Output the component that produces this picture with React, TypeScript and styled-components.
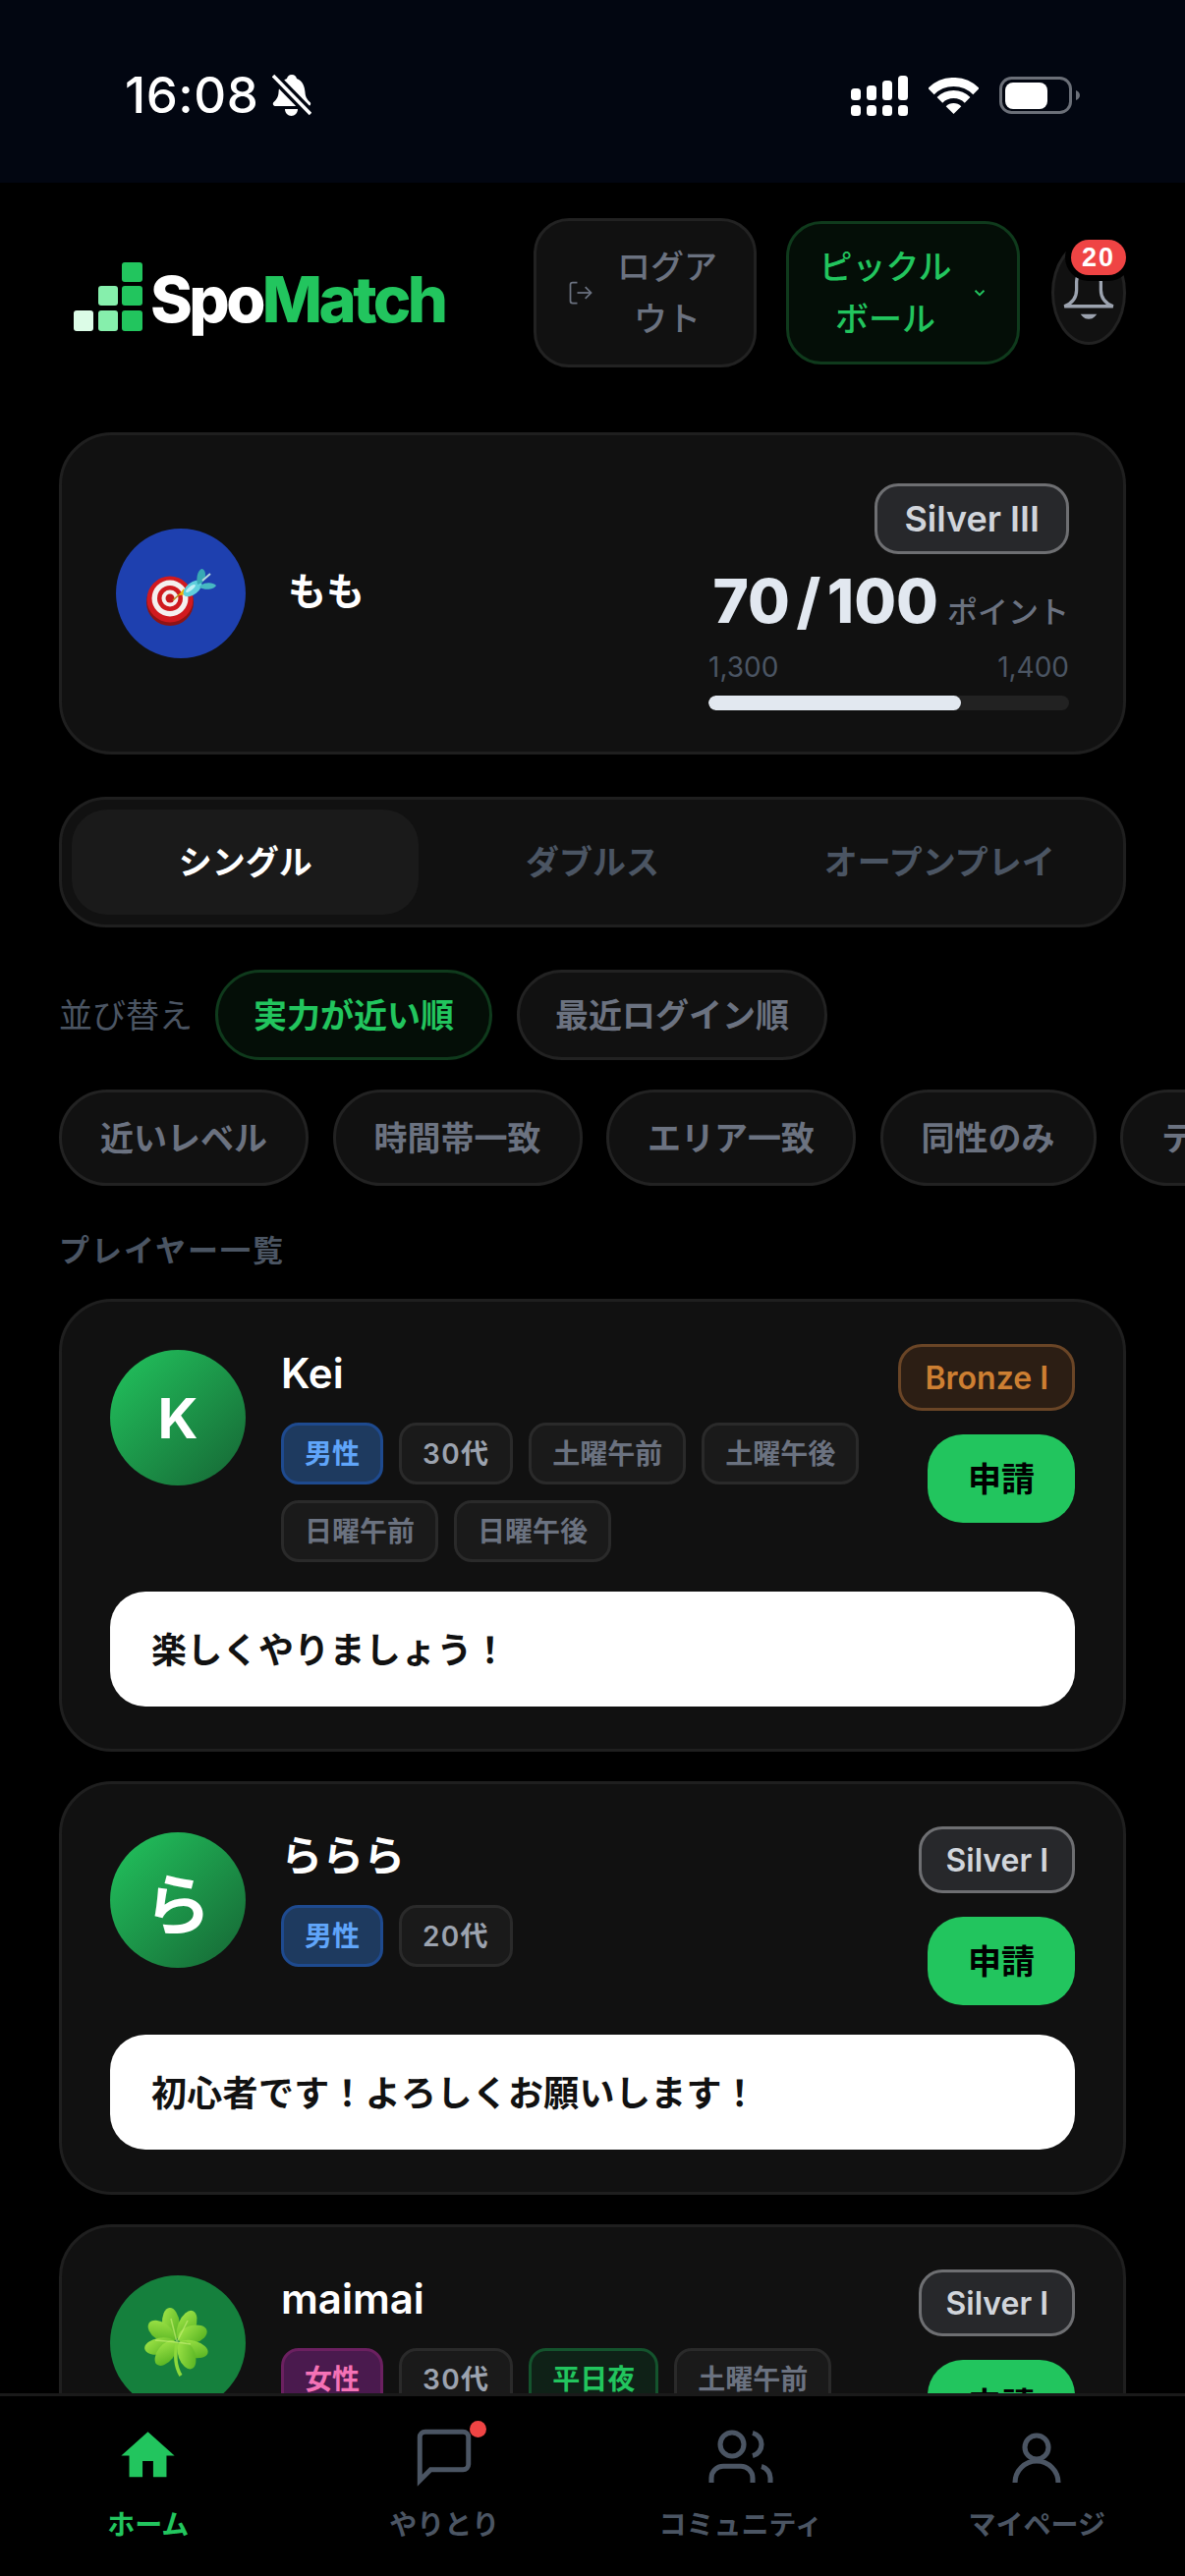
import styled, { createGlobalStyle } from 'styled-components'

const GlobalStyle = createGlobalStyle`
  html, body {
    margin: 0;
    background: #000;
  }
  * {
    box-sizing: border-box;
  }
  body {
    font-family: Inter, "Noto Sans CJK JP", "Noto Sans", sans-serif;
  }
`

const Page = styled.div`
  width: 1206px;
  height: 100vh;
  display: flex;
  flex-direction: column;
  overflow: hidden;
  background: #000;
`

/* ---------- status bar ---------- */
const StatusBar = styled.div`
  flex: none;
  height: 186px;
  background: #020611;
  display: flex;
  align-items: flex-start;
  justify-content: space-between;
  padding: 72px 107px 0 127px;
`

const StatusLeft = styled.div`
  display: flex;
  align-items: center;
  gap: 14px;
  height: 50px;
`

const Clock = styled.span`
  color: #fff;
  font-size: 51px;
  font-weight: 500;
  line-height: 50px;
  letter-spacing: 0.5px;
`

const StatusRight = styled.div`
  display: flex;
  align-items: center;
  gap: 21px;
  height: 50px;
`

/* ---------- header ---------- */
const Header = styled.header`
  flex: none;
  display: flex;
  align-items: center;
  justify-content: space-between;
  padding: 36px 60px 66px 75px;
`

const Logo = styled.div`
  display: flex;
  align-items: flex-end;
  gap: 8px;
  margin-top: 8px;
`

const LogoText = styled.span`
  font-size: 65px;
  font-weight: 800;
  line-height: 70px;
  letter-spacing: -3.6px;
  color: #fff;
  margin-bottom: -3px;

  em {
    font-style: normal;
    color: #22c55e;
  }
`

const HeaderActions = styled.div`
  display: flex;
  align-items: center;
  gap: 30px;
`

const LogoutButton = styled.button`
  width: 227px;
  height: 152px;
  display: flex;
  align-items: center;
  justify-content: center;
  gap: 22px;
  padding: 0 5px 0 0;
  background: #111;
  border: 3px solid #222;
  border-radius: 36px;
  color: #6b7280;
  font: inherit;
  font-size: 34px;
  font-weight: 500;
  line-height: 53px;
  text-align: center;
`

const SportButton = styled(LogoutButton)`
  width: 238px;
  height: 146px;
  gap: 18px;
  padding: 0;
  background: #040e07;
  border-color: #0f3a1c;
  color: #22c55e;
`

const WrapLabel = styled.span`
  width: ${(props) => props.$width}px;
`

const BellButton = styled.button`
  position: relative;
  width: 76px;
  height: 106px;
  margin-left: 2px;
  display: flex;
  align-items: center;
  justify-content: center;
  padding: 0;
  background: #111;
  border: 3px solid #222;
  border-radius: 50%;
`

const BellBadge = styled.span`
  position: absolute;
  top: -4px;
  right: -3px;
  width: 56px;
  height: 36px;
  display: flex;
  align-items: center;
  justify-content: center;
  background: #ef4444;
  border-radius: 18px;
  box-shadow: 0 0 0 6px #000;
  color: #fff;
  font-size: 27px;
  font-weight: 700;
  letter-spacing: 2px;
`

/* ---------- main column ---------- */
const Main = styled.main`
  flex: 1;
  min-height: 0;
  overflow: hidden;
  padding: 0 60px;
`

const ProfileCard = styled.section`
  height: 328px;
  display: flex;
  align-items: center;
  justify-content: space-between;
  padding: 49px 55px 42px;
  background: #111;
  border: 3px solid #1f1f1f;
  border-radius: 54px;
`

const ProfileLeft = styled.div`
  display: flex;
  align-items: center;
  gap: 43px;
  margin-top: -7px;
`

const ProfileName = styled.div`
  color: #fff;
  font-size: 39px;
  font-weight: 700;
  margin-bottom: 10px;
`

const ProfileRight = styled.div`
  width: 367px;
  display: flex;
  flex-direction: column;
  align-items: flex-end;
`

const RankBadge = styled.span`
  display: inline-flex;
  align-items: center;
  justify-content: center;
  height: ${(props) => (props.$large ? 72 : 68)}px;
  padding: 0 ${(props) => (props.$large ? 27 : 24)}px;
  flex: none;
  background: ${(props) => (props.$rank === 'bronze' ? '#2c1e14' : '#27282b')};
  border: 3px solid ${(props) => (props.$rank === 'bronze' ? '#6a4526' : '#6e6f72')};
  border-radius: 24px;
  color: ${(props) => (props.$rank === 'bronze' ? '#cd7f32' : '#d1d5db')};
  font-size: ${(props) => (props.$large ? 36 : 32)}px;
  font-weight: 600;
  white-space: nowrap;
`

const Points = styled.div`
  display: flex;
  align-items: baseline;
  justify-content: flex-end;
  gap: 9px;
  margin-top: 12px;
  width: 100%;
  height: 72px;
  line-height: 72px;
  white-space: nowrap;
`

const PointsValue = styled.span`
  flex: none;
  color: #e2e8f0;
  font-size: 62px;
  font-weight: 800;
  word-spacing: -7px;
`

const PointsUnit = styled.span`
  flex: none;
  color: #6b7280;
  font-size: 31px;
  font-weight: 500;
`

const RangeRow = styled.div`
  display: flex;
  justify-content: space-between;
  width: 100%;
  margin-top: 15px;
  color: #4b5563;
  font-size: 28px;
  line-height: 33px;
`

const ProgressTrack = styled.div`
  width: 100%;
  height: 15px;
  margin-top: 12px;
  background: #222;
  border-radius: 8px;
  overflow: hidden;
`

const ProgressFill = styled.div`
  height: 100%;
  background: #e2e8f0;
  border-radius: 8px;
`

const Tabs = styled.div`
  height: 133px;
  margin-top: 43px;
  padding: 10px;
  display: grid;
  grid-template-columns: repeat(3, 1fr);
  background: #111;
  border: 3px solid #1f1f1f;
  border-radius: 48px;
`

const Tab = styled.div`
  display: flex;
  align-items: center;
  justify-content: center;
  padding-bottom: 5px;
  border-radius: 36px;
  background: ${(props) => (props.$active ? '#1a1a1a' : 'transparent')};
  color: ${(props) => (props.$active ? '#fff' : '#4b5563')};
  font-size: 34px;
  font-weight: ${(props) => (props.$active ? 700 : 600)};
`

const SortRow = styled.div`
  display: flex;
  align-items: center;
  gap: 25px;
  margin-top: 43px;
`

const SortLabel = styled.span`
  color: #4b5563;
  font-size: 34px;
  margin-right: -2px;
  padding-bottom: 4px;
`

const Chip = styled.span`
  flex: none;
  display: inline-flex;
  align-items: center;
  height: ${(props) => (props.$tall ? 98 : 92)}px;
  padding: 0 ${(props) => (props.$tall ? 39 : 36)}px 4px;
  background: ${(props) => (props.$active ? '#040e07' : '#111')};
  border: 3px solid ${(props) => (props.$active ? '#0f3a1c' : '#222')};
  border-radius: 49px;
  color: ${(props) => (props.$active ? '#22c55e' : '#6b7280')};
  font-size: 34px;
  font-weight: 600;
  white-space: nowrap;
`

const FilterRow = styled.div`
  display: flex;
  gap: 24.5px;
  margin: 30px -60px 0 0;
  overflow: hidden;
`

const SectionTitle = styled.h2`
  margin: 48px 0 31px;
  color: #4b5563;
  font-size: 31px;
  font-weight: 600;
  line-height: 36px;
  letter-spacing: 2px;
`

const PlayerList = styled.div`
  display: flex;
  flex-direction: column;
  gap: 30px;
`

const PlayerCard = styled.article`
  padding: 43px 49px;
  background: #111;
  border: 3px solid #1f1f1f;
  border-radius: 54px;
`

const PlayerHead = styled.div`
  display: flex;
  align-items: flex-start;
  gap: 36px;
  margin-bottom: 30px;
`

const Avatar = styled.div`
  flex: none;
  width: ${(props) => props.$size}px;
  height: ${(props) => props.$size}px;
  display: flex;
  align-items: center;
  justify-content: center;
  border-radius: 50%;
  background: ${(props) => props.$bg};
  color: #fff;
  font-size: ${(props) => props.$fontSize || 57}px;
  font-weight: 700;
`

const PlayerAvatar = styled(Avatar)`
  margin-top: 6px;
`

const PlayerInfo = styled.div`
  flex: 1;
  min-width: 0;
`

const PlayerName = styled.div`
  height: 80px;
  color: #fff;
  font-size: 42px;
  font-weight: 600;
  line-height: 60px;
`

const TagList = styled.div`
  display: flex;
  flex-wrap: wrap;
  gap: 16px;
`

const tagColors = {
  male: { bg: '#1e3a5f', border: '#1e4a8f', text: '#60a5fa' },
  female: { bg: '#4a1a4e', border: '#6b2060', text: '#f472b6' },
  age: { bg: '#1a1a1a', border: '#2a2a2a', text: '#9ca3af' },
  slot: { bg: '#1a1a1a', border: '#2a2a2a', text: '#6b7280' },
  night: { bg: '#0f2117', border: '#14532d', text: '#22c55e' },
}

const Tag = styled.span`
  height: 63px;
  display: inline-flex;
  align-items: center;
  padding: 0 21px 3px;
  background: ${(props) => tagColors[props.$kind].bg};
  border: 3px solid ${(props) => tagColors[props.$kind].border};
  border-radius: 18px;
  color: ${(props) => tagColors[props.$kind].text};
  font-size: 28px;
  font-weight: 600;
  letter-spacing: ${(props) => (props.$kind === 'age' ? 1.3 : 0)}px;
  white-space: nowrap;
`

const PlayerSide = styled.div`
  flex: none;
  display: flex;
  flex-direction: column;
  align-items: flex-end;
  gap: 24px;
`

const ApplyButton = styled.button`
  width: 150px;
  height: 90px;
  padding: 0 0 4px;
  background: #22c55e;
  border: none;
  border-radius: 36px;
  color: #000;
  font: inherit;
  font-size: 34px;
  font-weight: 700;
`

const Message = styled.div`
  height: 117px;
  display: flex;
  align-items: center;
  padding: 0 42px 4px;
  background: #fff;
  border-radius: 36px;
  color: #111;
  font-size: 36px;
  font-weight: 600;
  letter-spacing: 0.3px;
`

/* ---------- bottom nav ---------- */
const BottomNav = styled.nav`
  flex: none;
  height: 186px;
  display: grid;
  grid-template-columns: repeat(4, 1fr);
  padding-top: 28px;
  background: #000;
  border-top: 3px solid #1a1a1a;
`

const NavItem = styled.div`
  display: flex;
  flex-direction: column;
  align-items: center;
  color: ${(props) => (props.$active ? '#22c55e' : '#4b5563')};
  font-size: 28px;
  font-weight: 600;
  line-height: 36px;
`

const NavIcon = styled.div`
  position: relative;
  height: 72px;
  margin-bottom: 13px;
  display: flex;
  justify-content: center;
`

const NavDot = styled.span`
  position: absolute;
  top: -3px;
  right: -10px;
  width: 17px;
  height: 17px;
  border-radius: 50%;
  background: #ef4444;
`

function MutedBell() {
  return (
    <svg width="40" height="44" viewBox="0 0 40 44" fill="none">
      <path
        d="M20 1c3 0 4.500 2 5 4 6 2 8 8 8.500 14 .3 5 2 7 5 10 1.500 1.500.5 4-2 4H3.500c-2.500 0-3.500-2.500-2-4 3-3 4.700-5 5-10 .5-6 2.500-12 8.500-14 .5-2 2-4 5-4z"
        fill="#fff"
      />
      <path d="M13 36h13c0 4-3 7-6.500 7S13 40 13 36z" fill="#fff" />
      <path d="M0 1 39 41" stroke="#020611" strokeWidth="10" />
      <path d="M1 2 39 41" stroke="#fff" strokeWidth="3.500" />
    </svg>
  )
}

function SignalIcon() {
  return (
    <svg width="58" height="41" viewBox="0 0 58 41" fill="#fff">
      <rect x="0" y="13" width="10" height="12" rx="3.500" />
      <rect x="16" y="10" width="10" height="15" rx="3.500" />
      <rect x="32" y="5" width="10" height="20" rx="3.500" />
      <rect x="48" y="0" width="10" height="25" rx="3.500" />
      <rect x="0" y="30" width="10" height="11" rx="3.500" />
      <rect x="16" y="30" width="10" height="11" rx="3.500" />
      <rect x="32" y="30" width="10" height="11" rx="3.500" />
      <rect x="48" y="30" width="10" height="11" rx="3.500" />
    </svg>
  )
}

function WifiIcon() {
  return (
    <svg width="51" height="37" viewBox="0 0 51 37" fill="none" stroke="#fff">
      <path d="M2.500 14A32.500 32.500 0 0 1 48.500 14" strokeWidth="9" />
      <path d="M11.400 22.900A20 20 0 0 1 39.600 22.900" strokeWidth="8" />
      <path d="M25.500 37 17.700 29.200A11 11 0 0 1 33.300 29.200z" fill="#fff" stroke="none" />
    </svg>
  )
}

function BatteryIcon() {
  return (
    <svg width="82" height="38" viewBox="0 0 82 38" fill="none">
      <rect x="1.500" y="1.500" width="71" height="35" rx="11" stroke="#6b6f78" strokeWidth="3" />
      <rect x="6" y="6" width="43" height="27" rx="8" fill="#fff" />
      <path d="M78 14c2 .5 4 2.500 4 5s-2 4.500-4 5z" fill="#6b6f78" />
    </svg>
  )
}

function LogoMark() {
  return (
    <svg width="70" height="70" viewBox="0 0 70 70">
      <rect x="0" y="49" width="20" height="21" rx="3" fill="#dcfce7" />
      <rect x="25" y="24" width="20" height="20" rx="3" fill="#86efac" />
      <rect x="25" y="49" width="20" height="21" rx="3" fill="#86efac" />
      <rect x="49" y="0" width="21" height="20" rx="3" fill="#22c55e" />
      <rect x="49" y="24" width="21" height="20" rx="3" fill="#22c55e" />
      <rect x="49" y="49" width="21" height="21" rx="3" fill="#22c55e" />
    </svg>
  )
}

function LogoutIcon() {
  return (
    <svg width="28" height="28" viewBox="0 0 24 24" fill="none" stroke="#6b7280" strokeWidth="1.500">
      <path d="M9 21H5a2 2 0 0 1-2-2V5a2 2 0 0 1 2-2h4" />
      <path d="M16 17l5-5-5-5" />
      <path d="M21 12H9" />
    </svg>
  )
}

function ChevronIcon() {
  return (
    <svg width="18" height="18" viewBox="0 0 24 24" fill="none" stroke="#22c55e" strokeWidth="2.500">
      <path d="M6 9l6 6 6-6" />
    </svg>
  )
}

function BellIcon() {
  return (
    <svg width="66" height="66" viewBox="0 0 24 24" fill="none" stroke="#9ca3af" strokeWidth="1.200">
      <path d="M7.500 8a4.500 4.500 0 0 1 9 0v3c0 3 2 5 4.500 6H3c2.500-1 4.500-3 4.500-6z" />
      <path d="M10.300 20.500a1.940 1.200 0 0 0 3.400 0z" fill="#9ca3af" />
    </svg>
  )
}

function DartEmoji() {
  return (
    <svg width="132" height="132" viewBox="0 0 132 132">
      <ellipse cx="55" cy="75" rx="24" ry="24" fill="#8f1414" />
      <circle cx="55" cy="72" r="23.500" fill="#d11a1f" />
      <circle cx="55" cy="71" r="18.500" fill="#f4f1ef" />
      <circle cx="55" cy="71" r="13" fill="#cf1a1e" />
      <circle cx="55" cy="71" r="8.500" fill="#f4f1ef" />
      <circle cx="55" cy="71" r="4.500" fill="#c8171b" />
      <path d="M58 73 68 64" stroke="#b98a1a" strokeWidth="1.500" />
      <path d="M64 68 69 61 73 67z" fill="#f2b707" />
      <ellipse cx="78" cy="61" rx="11" ry="6" fill="#5fd0dc" transform="rotate(-38 78 61)" />
      <ellipse cx="76" cy="61" rx="6" ry="2" fill="#bff1f5" transform="rotate(-38 76 61)" />
      <path d="M83 57C81 49 84 41 88 41C92 43 92 50 88 55z" fill="#38a9b4" />
      <path d="M86 58C92 54 99 55 102 58C100 62 91 63 85 60z" fill="#46b8c2" />
      <path d="M88 53 96 46" stroke="#b6d8dc" strokeWidth="2" />
    </svg>
  )
}

function CloverEmoji() {
  return (
    <svg width="138" height="138" viewBox="0 0 138 138">
      <defs>
        <linearGradient id="leaf" x1="0" y1="0" x2="1" y2="1">
          <stop offset="0" stopColor="#a5e84a" />
          <stop offset="1" stopColor="#4fae1e" />
        </linearGradient>
      </defs>
      <g fill="url(#leaf)">
        <ellipse cx="62" cy="50" rx="9" ry="17" transform="rotate(-5 62 50)" />
        <ellipse cx="52" cy="57" rx="15" ry="9" transform="rotate(35 52 57)" />
        <ellipse cx="78" cy="52" rx="9" ry="17" transform="rotate(22 78 52)" />
        <ellipse cx="84" cy="60" rx="15" ry="9" transform="rotate(-15 84 60)" />
        <ellipse cx="51" cy="72" rx="16" ry="8.500" transform="rotate(-10 51 72)" />
        <ellipse cx="57" cy="79" rx="8.500" ry="15" transform="rotate(38 57 79)" />
        <ellipse cx="84" cy="75" rx="16" ry="8.500" transform="rotate(15 84 75)" />
        <ellipse cx="78" cy="81" rx="8.500" ry="15" transform="rotate(-20 78 81)" />
      </g>
      <path d="M68 68C66 82 66 92 72 102" fill="none" stroke="#8cd83c" strokeWidth="3.500" />
      <path
        d="M68 68 62 44M68 68 79 46M68 68 46 66M68 68 82 70"
        fill="none"
        stroke="#c9f27a"
        strokeWidth="1.500"
        opacity="0.6"
      />
    </svg>
  )
}

function HomeIcon() {
  return (
    <svg width="65" height="65" viewBox="0 0 24 24" fill="#22c55e">
      <path d="M10 20v-6h4v6h5v-8h3L12 3 2 12h3v8z" />
    </svg>
  )
}

function ChatIcon() {
  return (
    <svg width="66" height="66" viewBox="0 0 24 24" fill="none" stroke="#4b5563" strokeWidth="1.800">
      <path d="M21 15a2 2 0 0 1-2 2H7l-4 4V5a2 2 0 0 1 2-2h14a2 2 0 0 1 2 2z" />
    </svg>
  )
}

function UsersIcon() {
  return (
    <svg width="72" height="72" viewBox="0 0 24 24" fill="none" stroke="#4b5563" strokeWidth="1.700">
      <circle cx="9" cy="7" r="4" />
      <path d="M16 20v-1.600a4 4 0 0 0-4-4H6a4 4 0 0 0-4 4v1.600" />
      <path d="M22 20v-1.600a4 4 0 0 0-3-3.870" />
      <path d="M16 3.130a4 4 0 0 1 0 7.750" />
    </svg>
  )
}

function UserIcon() {
  return (
    <svg width="72" height="72" viewBox="0 0 24 24" fill="none" stroke="#4b5563" strokeWidth="1.700">
      <circle cx="12" cy="8" r="4" />
      <path d="M4.670 20a7.330 7.330 0 0 1 14.660 0" />
    </svg>
  )
}

const greenGradient = 'linear-gradient(135deg, #22c55e, #166534)'

const players = [
  {
    name: 'Kei',
    avatar: 'K',
    bg: greenGradient,
    rank: 'bronze',
    rankLabel: 'Bronze I',
    tags: [
      ['男性', 'male'],
      ['30代', 'age'],
      ['土曜午前', 'slot'],
      ['土曜午後', 'slot'],
      ['日曜午前', 'slot'],
      ['日曜午後', 'slot'],
    ],
    message: '楽しくやりましょう！',
  },
  {
    name: 'ららら',
    avatar: 'ら',
    avatarFont: 68,
    bg: greenGradient,
    rank: 'silver',
    rankLabel: 'Silver I',
    tags: [
      ['男性', 'male'],
      ['20代', 'age'],
    ],
    message: '初心者です！よろしくお願いします！',
  },
  {
    name: 'maimai',
    avatar: <CloverEmoji />,
    bg: '#15803d',
    rank: 'silver',
    rankLabel: 'Silver I',
    tags: [
      ['女性', 'female'],
      ['30代', 'age'],
      ['平日夜', 'night'],
      ['土曜午前', 'slot'],
    ],
  },
]

export default function App() {
  return (
    <Page>
      <GlobalStyle />
      <StatusBar>
        <StatusLeft>
          <Clock>16:08</Clock>
          <MutedBell />
        </StatusLeft>
        <StatusRight>
          <SignalIcon />
          <WifiIcon />
          <BatteryIcon />
        </StatusRight>
      </StatusBar>

      <Header>
        <Logo>
          <LogoMark />
          <LogoText>
            Spo<em>Match</em>
          </LogoText>
        </Logo>
        <HeaderActions>
          <LogoutButton>
            <LogoutIcon />
            <WrapLabel $width={104}>ログアウト</WrapLabel>
          </LogoutButton>
          <SportButton>
            <WrapLabel $width={138}>ピックルボール</WrapLabel>
            <ChevronIcon />
          </SportButton>
          <BellButton>
            <BellIcon />
            <BellBadge>20</BellBadge>
          </BellButton>
        </HeaderActions>
      </Header>

      <Main>
        <ProfileCard>
          <ProfileLeft>
            <Avatar $size={132} $bg="#1e40af">
              <DartEmoji />
            </Avatar>
            <ProfileName>もも</ProfileName>
          </ProfileLeft>
          <ProfileRight>
            <RankBadge $large $rank="silver">
              Silver III
            </RankBadge>
            <Points>
              <PointsValue>70 / 100</PointsValue>
              <PointsUnit>ポイント</PointsUnit>
            </Points>
            <RangeRow>
              <span>1,300</span>
              <span>1,400</span>
            </RangeRow>
            <ProgressTrack>
              <ProgressFill style={{ width: '70%' }} />
            </ProgressTrack>
          </ProfileRight>
        </ProfileCard>

        <Tabs>
          <Tab $active>シングル</Tab>
          <Tab>ダブルス</Tab>
          <Tab>オープンプレイ</Tab>
        </Tabs>

        <SortRow>
          <SortLabel>並び替え</SortLabel>
          <Chip $active>実力が近い順</Chip>
          <Chip>最近ログイン順</Chip>
        </SortRow>

        <FilterRow>
          <Chip $tall>近いレベル</Chip>
          <Chip $tall>時間帯一致</Chip>
          <Chip $tall>エリア一致</Chip>
          <Chip $tall>同性のみ</Chip>
          <Chip $tall>テ</Chip>
        </FilterRow>

        <SectionTitle>プレイヤー一覧</SectionTitle>

        <PlayerList>
          {players.map((player) => (
            <PlayerCard key={player.name}>
              <PlayerHead>
                <PlayerAvatar $size={138} $bg={player.bg} $fontSize={player.avatarFont}>
                  {player.avatar}
                </PlayerAvatar>
                <PlayerInfo>
                  <PlayerName>{player.name}</PlayerName>
                  <TagList>
                    {player.tags.map(([label, kind]) => (
                      <Tag key={label} $kind={kind}>
                        {label}
                      </Tag>
                    ))}
                  </TagList>
                </PlayerInfo>
                <PlayerSide>
                  <RankBadge $rank={player.rank}>{player.rankLabel}</RankBadge>
                  <ApplyButton>申請</ApplyButton>
                </PlayerSide>
              </PlayerHead>
              {player.message && <Message>{player.message}</Message>}
            </PlayerCard>
          ))}
        </PlayerList>
      </Main>

      <BottomNav>
        <NavItem $active>
          <NavIcon>
            <HomeIcon />
          </NavIcon>
          ホーム
        </NavItem>
        <NavItem>
          <NavIcon>
            <ChatIcon />
            <NavDot />
          </NavIcon>
          やりとり
        </NavItem>
        <NavItem>
          <NavIcon>
            <UsersIcon />
          </NavIcon>
          コミュニティ
        </NavItem>
        <NavItem>
          <NavIcon>
            <UserIcon />
          </NavIcon>
          マイページ
        </NavItem>
      </BottomNav>
    </Page>
  )
}
